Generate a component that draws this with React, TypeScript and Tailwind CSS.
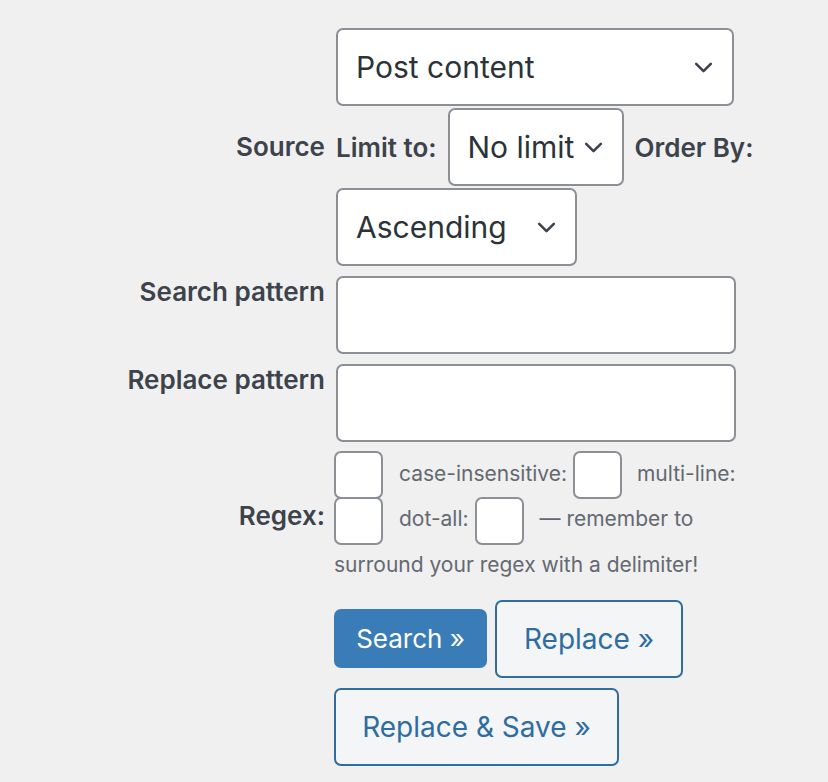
import { ReactNode } from "react";

function Chevron() {
  return (
    <svg viewBox="0 0 20 12" className="w-[19px] h-[11px] shrink-0" fill="none">
      <polyline points="2,2 10,10 18,2" stroke="#3c434a" strokeWidth="2.8" strokeLinecap="round" strokeLinejoin="round" />
    </svg>
  );
}

function Select({ value, width }: { value: string; width: string }) {
  return (
    <div
      className={`${width} h-[78px] flex items-center justify-between pl-[18px] pr-[19px] bg-white border-2 border-[#8c8f94] rounded-[7px] text-[30px] text-[#2c3338]`}
    >
      <span>{value}</span>
      <Chevron />
    </div>
  );
}

function Label({ children, className = "" }: { children: ReactNode; className?: string }) {
  return (
    <div className={`text-right pr-[11px] text-[26px] font-semibold text-[#3c434a] leading-[32px] ${className}`}>
      {children}
    </div>
  );
}

function Checkbox() {
  return (
    <span className="inline-block align-middle w-[49px] h-[48px] my-[-2px] bg-white border-2 border-[#8c8f94] rounded-[7px]" />
  );
}

export default function App() {
  return (
    <div className="min-h-screen bg-[#f0f0f1] pt-[28px] font-[Inter,'Noto_Sans',sans-serif] text-[#3c434a]">
      <div className="grid grid-cols-[336px_430px] gap-y-[10px]">
        {/* Source */}
        <Label className="self-center">Source</Label>
        <div className="flex flex-wrap items-center gap-x-[11px] gap-y-[2px]">
          <Select value="Post content" width="w-[398px]" />
          <span className="text-[26px] font-semibold">Limit to:</span>
          <Select value="No limit" width="w-[176px]" />
          <span className="text-[26px] font-semibold">Order By:</span>
          <Select value="Ascending" width="w-[241px]" />
        </div>

        {/* Patterns */}
        <Label>Search pattern</Label>
        <div className="w-[400px] h-[78px] bg-white border-2 border-[#8c8f94] rounded-[7px]" />

        <Label>Replace pattern</Label>
        <div className="w-[400px] h-[78px] bg-white border-2 border-[#8c8f94] rounded-[7px]" />

        {/* Regex flags */}
        <Label className="self-center pb-[6px]">Regex:</Label>
        <div className="-ml-[2px] text-[21px] leading-[44px] text-[#646970]">
          <Checkbox />
          <span className="ml-[16px]">case-insensitive: </span>
          <Checkbox />
          <span className="ml-[15px]">multi-line: </span>
          <Checkbox />
          <span className="ml-[16px]">dot-all: </span>
          <Checkbox />
          <span className="ml-[16px]">— remember to surround your regex with a delimiter!</span>
        </div>

        {/* Actions */}
        <div />
        <div className="flex flex-wrap items-center gap-x-[8px] gap-y-[10px] pt-[3px] -ml-[2px]">
          <button className="h-[59px] w-[153px] rounded-[7px] bg-[#3a7cb8] text-white text-[26px]">
            Search »
          </button>
          <button className="h-[78px] w-[188px] rounded-[7px] border-2 border-[#2f6c9f] bg-[#f3f5f6] text-[#2f6c9f] text-[28px]">
            Replace »
          </button>
          <button className="h-[78px] w-[285px] rounded-[7px] border-2 border-[#2f6c9f] bg-[#f3f5f6] text-[#2f6c9f] text-[28px]">
            Replace &amp; Save »
          </button>
        </div>
      </div>
    </div>
  );
}
